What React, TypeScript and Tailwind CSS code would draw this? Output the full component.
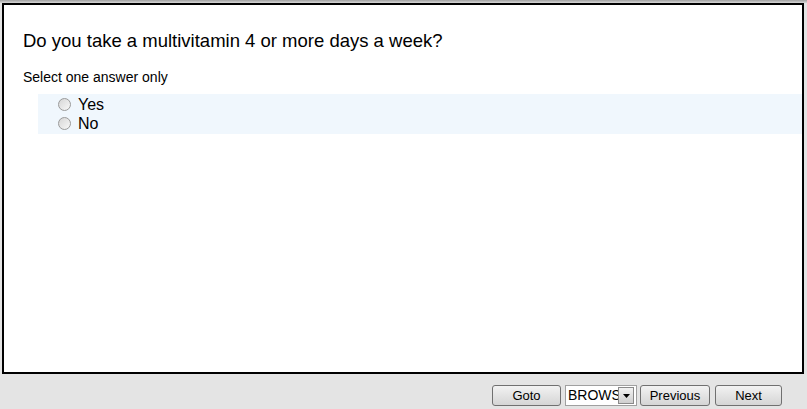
import React from "react";

function Radio() {
  return (
    <span className="inline-block h-[13px] w-[13px] shrink-0 rounded-full border border-[#9a9a9a] bg-gradient-to-br from-[#d6d6d6] to-[#f8f8f8]" />
  );
}

function Btn({ label, w }: { label: string; w: string }) {
  return (
    <button
      className={`flex h-[21px] shrink-0 items-center justify-center rounded-[3px] border border-[#707070] bg-gradient-to-b from-[#f2f2f2] to-[#d5d5d5] text-[13px] text-black ${w}`}
    >
      {label}
    </button>
  );
}

export default function App() {
  return (
    <div className="flex h-[409px] w-[807px] flex-col bg-[#e4e4e4] font-['Liberation_Sans',Arial,sans-serif]">
      <div className="h-[3px] bg-gradient-to-b from-[#a0a0a0] to-[#d8d8d8]" />
      <div className="ml-[2px] mr-[3px] h-[371px] border-2 border-black bg-white">
        <h1 className="ml-[19px] mt-[25px] text-[18.5px] leading-[22px] text-black">
          Do you take a multivitamin 4 or more days a week?
        </h1>
        <p className="ml-[19px] mt-[17px] text-[14px] leading-[16px] text-black">
          Select one answer only
        </p>
        <div className="ml-[34px] mt-[9px] flex flex-col bg-[#f0f7fd] pb-[1px] pt-[1px] pl-[20px]">
          <label className="flex h-[19px] items-center gap-[7px] text-[16px] leading-[19px] text-black">
            <Radio />
            Yes
          </label>
          <label className="flex h-[19px] items-center gap-[7px] text-[16px] leading-[19px] text-black">
            <Radio />
            No
          </label>
        </div>
      </div>
      <div className="mt-[11px] flex items-center pl-[492px]">
        <Btn label="Goto" w="w-[69px]" />
        <div className="ml-[4px] flex h-[21px] w-[72px] shrink-0 items-center overflow-hidden border border-[#a0a0a0] bg-white">
          <span className="w-[52px] shrink-0 overflow-hidden whitespace-nowrap pl-[2px] text-[14px] leading-[19px] text-black">
            BROWSE
          </span>
          <span className="flex h-[17px] w-[16px] shrink-0 items-center justify-center border border-[#8a8a8a] bg-gradient-to-b from-[#f2f2f2] to-[#cfcfcf]">
            <svg width="7" height="4" viewBox="0 0 7 4">
              <path d="M0 0H7L3.5 4Z" fill="#000" />
            </svg>
          </span>
        </div>
        <div className="ml-[3px]">
          <Btn label="Previous" w="w-[70px]" />
        </div>
        <div className="ml-[5px]">
          <Btn label="Next" w="w-[67px]" />
        </div>
      </div>
    </div>
  );
}
